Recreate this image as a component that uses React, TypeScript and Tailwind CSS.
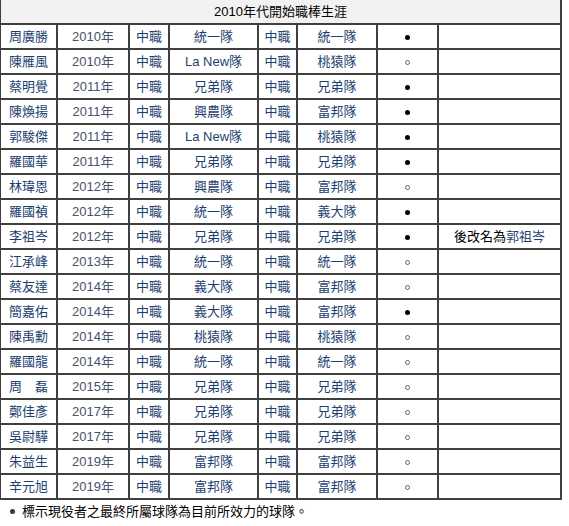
import React from "react";

type Row = {
  name: string;
  year: string;
  team: string;
  now: string;
  active: boolean;
  note?: boolean;
};

const rows: Row[] = [
  { name: "周廣勝", year: "2010年", team: "統一隊", now: "統一隊", active: true },
  { name: "陳雁風", year: "2010年", team: "La New隊", now: "桃猿隊", active: false },
  { name: "蔡明覺", year: "2011年", team: "兄弟隊", now: "兄弟隊", active: true },
  { name: "陳煥揚", year: "2011年", team: "興農隊", now: "富邦隊", active: true },
  { name: "郭駿傑", year: "2011年", team: "La New隊", now: "桃猿隊", active: true },
  { name: "羅國華", year: "2011年", team: "兄弟隊", now: "兄弟隊", active: true },
  { name: "林瑋恩", year: "2012年", team: "興農隊", now: "富邦隊", active: false },
  { name: "羅國禎", year: "2012年", team: "統一隊", now: "義大隊", active: true },
  { name: "李祖岑", year: "2012年", team: "兄弟隊", now: "兄弟隊", active: true, note: true },
  { name: "江承峰", year: "2013年", team: "統一隊", now: "統一隊", active: false },
  { name: "蔡友達", year: "2014年", team: "義大隊", now: "富邦隊", active: false },
  { name: "簡嘉佑", year: "2014年", team: "義大隊", now: "富邦隊", active: true },
  { name: "陳禹勳", year: "2014年", team: "桃猿隊", now: "桃猿隊", active: false },
  { name: "羅國龍", year: "2014年", team: "統一隊", now: "統一隊", active: false },
  { name: "周　磊", year: "2015年", team: "兄弟隊", now: "兄弟隊", active: false },
  { name: "鄭佳彥", year: "2017年", team: "兄弟隊", now: "兄弟隊", active: false },
  { name: "吳尉驊", year: "2017年", team: "兄弟隊", now: "兄弟隊", active: false },
  { name: "朱益生", year: "2019年", team: "富邦隊", now: "富邦隊", active: false },
  { name: "辛元旭", year: "2019年", team: "富邦隊", now: "富邦隊", active: false },
];

const cell = "h-[25px] p-0 text-center align-middle border-r-2 border-b-2 border-[#3f3f3f]";
const link = "text-[#1d3f70]";

export default function App() {
  return (
    <div
      className="w-[569px] h-[526px] bg-white text-[13px] leading-none text-black"
      style={{ fontFamily: '"Liberation Sans", "Noto Sans CJK TC", sans-serif' }}
    >
      <table className="table-fixed border-separate border-spacing-0 border-l border-[#3f3f3f] w-[562px]">
        <colgroup>
          <col className="w-[57px]" />
          <col className="w-[72px]" />
          <col className="w-[40px]" />
          <col className="w-[89px]" />
          <col className="w-[39px]" />
          <col className="w-[80px]" />
          <col className="w-[61px]" />
          <col className="w-[123px]" />
        </colgroup>
        <thead>
          <tr>
            <th colSpan={8} className={`${cell} bg-[#f2f2f2] font-normal`}>
              2010年代開始職棒生涯
            </th>
          </tr>
        </thead>
        <tbody>
          {rows.map((r) => (
            <tr key={r.name}>
              <td className={`${cell} ${link}`}>{r.name}</td>
              <td className={`${cell} text-[#47526b]`}>{r.year}</td>
              <td className={`${cell} ${link}`}>中職</td>
              <td className={`${cell} ${link}`}>{r.team}</td>
              <td className={`${cell} ${link}`}>中職</td>
              <td className={`${cell} ${link}`}>{r.now}</td>
              <td className={cell}>
                {r.active ? (
                  <span className="inline-block w-[5px] h-[5px] rounded-full bg-black align-middle" />
                ) : (
                  <span className="inline-block w-[5px] h-[5px] rounded-full border border-[#666] align-middle" />
                )}
              </td>
              <td className={cell}>
                {r.note && (
                  <span>
                    後改名為<span className={link}>郭祖岑</span>
                  </span>
                )}
              </td>
            </tr>
          ))}
        </tbody>
      </table>
      <ul className="mt-[3px] pl-[10px]">
        <li className="flex items-center gap-[7px] h-[16px]">
          <span className="inline-block w-[5px] h-[5px] rounded-full bg-[#2a3a55]" />
          <span>標示現役者之最終所屬球隊為目前所效力的球隊。</span>
        </li>
      </ul>
    </div>
  );
}
